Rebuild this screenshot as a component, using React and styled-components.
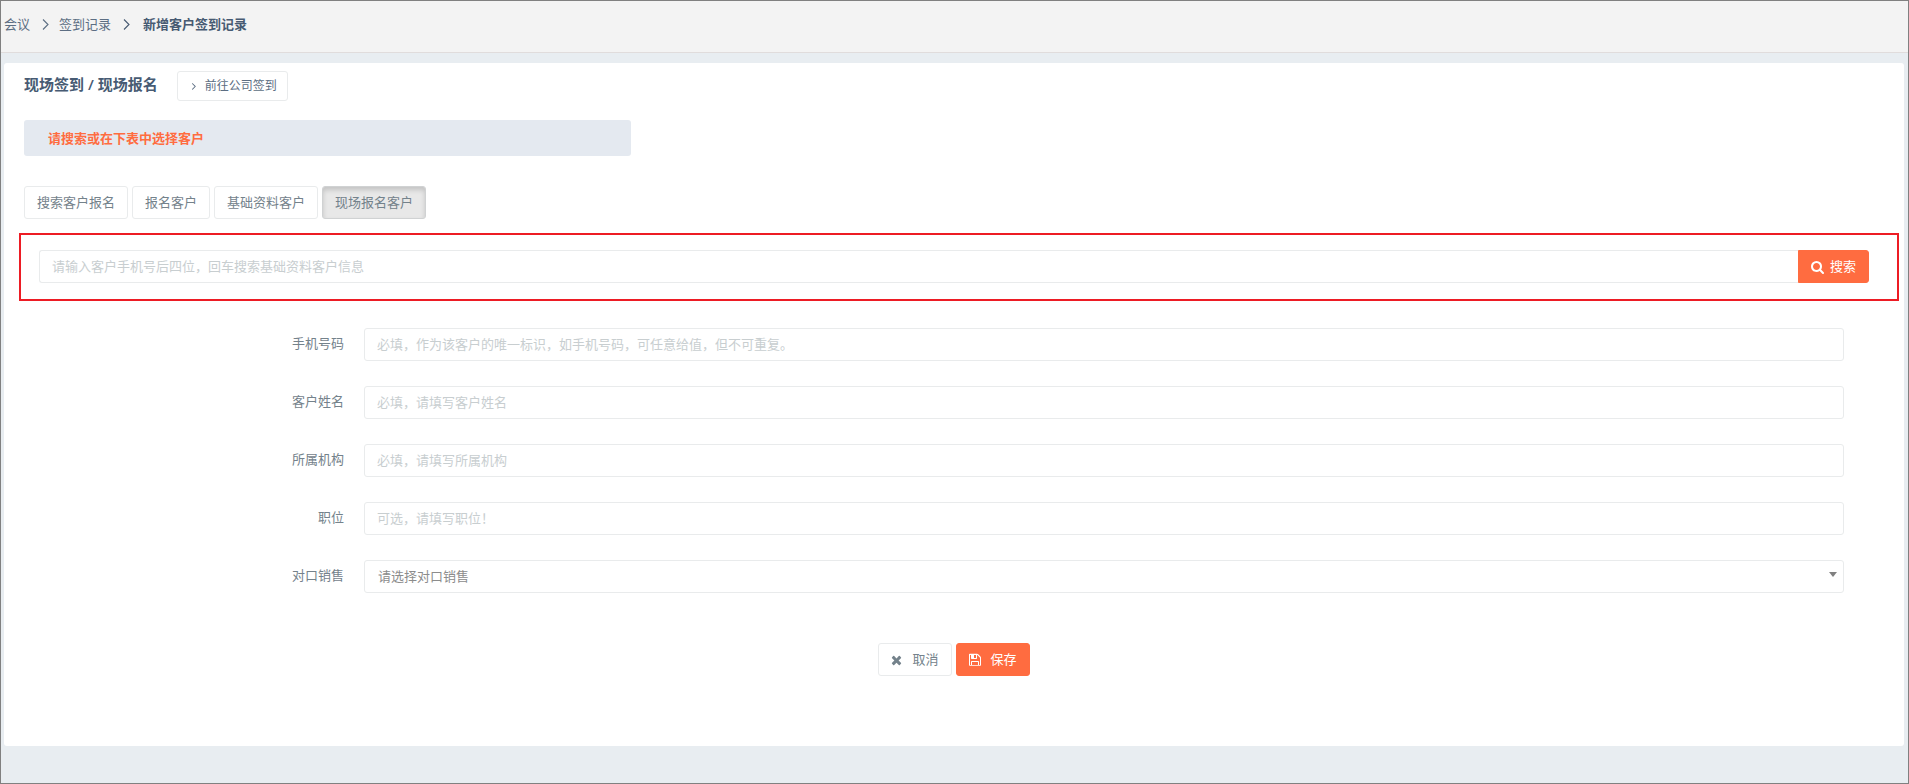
import React from "react";
import styled, { createGlobalStyle, css } from "styled-components";

const GlobalStyle = createGlobalStyle`
  *, *::before, *::after { box-sizing: border-box; }
  body { margin: 0; }
  body, button, input, select {
    font-family: "Open Sans", "Noto Sans CJK SC", sans-serif;
    font-size: 13px;
    font-weight: 400;
    line-height: 19px;
  }
`;

const Page = styled.div`
  min-height: 100vh;
  border: 1px solid #808080;
  background: #e8edf1;
  color: #74828b;
`;

const Header = styled.header`
  padding: 14px 3px 18px;
  background: #f3f3f3;
  border-bottom: 1px solid #e0dcdc;
`;

const Crumbs = styled.ol`
  display: flex;
  align-items: center;
  margin: 0;
  padding: 0;
  list-style: none;
  color: #475a72;
`;

const Chevron = styled.svg`
  flex: none;
  width: 7px;
  height: 11px;
  margin: 0 ${(p) => (p.$wide ? 13 : 10)}px 0 12px;
  fill: none;
  stroke: currentColor;
  stroke-width: 1.1;
`;

const Crumb = styled.li`
  display: flex;
  align-items: center;
  color: ${(p) => (p.$current ? "#475a72" : "#5c6e83")};
  font-weight: ${(p) => (p.$current ? 700 : 400)};
`;

const CrumbLink = styled.a`
  color: inherit;
  text-decoration: none;
`;

const Card = styled.main`
  margin: 10px 4px 37px 3px;
  padding: 8px 20px 70px;
  background: #fff;
  border-radius: 3px;
`;

const TitleRow = styled.div`
  display: flex;
  align-items: center;
  gap: 19px;
`;

const Title = styled.h1`
  margin: 0 0 4px;
  font-size: 15px;
  line-height: 22px;
  font-weight: 600;
  color: #475b73;
`;

const Button = styled.button`
  display: inline-flex;
  align-items: center;
  height: 33px;
  padding: 0 12px;
  border: 1px solid #e9ebec;
  border-radius: 3px;
  background: #fff;
  color: #74828b;
  white-space: nowrap;
  cursor: pointer;

  ${(p) => p.$small && css`
    height: 30px;
    padding: 0 10px 1px;
    font-size: 12px;
    color: #5c6e83;
  `}
  ${(p) => p.$active && css`
    background: #e8e8e8;
    border-color: #d0d2d3;
    box-shadow: inset 0 3px 5px rgba(0, 0, 0, 0.16);
  `}
  ${(p) => p.$primary && css`
    background: #ff6c40;
    border-color: #ff6c40;
    color: #fff;
  `}
`;

const Icon = styled.svg`
  flex: none;
  width: ${(p) => p.$width}px;
  height: ${(p) => p.$height}px;
  margin-right: ${(p) => p.$gap}px;
  fill: currentColor;
`;

const Notice = styled.p`
  width: calc((100% + 20px) / 3 - 20px);
  margin: 19px 0 30px;
  padding: 9px 24px 8px;
  border-radius: 3px;
  background: #e4e9f0;
  color: #ff6c40;
  font-weight: 600;
`;

const Tabs = styled.div`
  display: flex;
  gap: 4px;
`;

const SearchBox = styled.form`
  display: flex;
  margin: 14px -15px 0 -5px;
  padding: 15px 28px 16px 18px;
  border: 2px solid #ed1c24;

  input { flex: 1; border-right: 0; border-radius: 3px 0 0 3px; }
  button { border-radius: 0 3px 3px 0; }
`;

const control = css`
  display: block;
  width: 100%;
  min-width: 0;
  height: 33px;
  padding: 0 12px 2px;
  border: 1px solid #e9ebec;
  border-radius: 3px;
  background: #fff;
`;

const Input = styled.input`
  ${control}
  color: #74828b;
  &::placeholder { color: #c8ced0; opacity: 1; }
`;

const Select = styled.select`
  ${control}
  padding: 0 13px;
  appearance: none;
  color: #8c8c8c;
`;

const SelectWrap = styled.div`
  position: relative;
`;

const Arrow = styled.span`
  position: absolute;
  top: 12px;
  right: 7px;
  border: solid transparent;
  border-width: 5px 4px 0;
  border-top-color: #808080;
  pointer-events: none;
`;

const Form = styled.form`
  padding: 27px 30px 0;
`;

const Field = styled.div`
  display: grid;
  grid-template-columns: 1fr 5fr;
  margin-bottom: 25px;
`;

const Label = styled.label`
  padding: 6px 10px 0 0;
  text-align: right;
`;

const FieldBody = styled.div`
  padding: 0 10px;
`;

const Actions = styled.div`
  display: flex;
  justify-content: center;
  gap: 4px;
  padding-top: 25px;
`;

const glyphs = {
  search: {
    box: "64 0 1664 1792", width: 13, height: 14, gap: 6,
    d: "M1216 832q0-185-131.5-316.5t-316.5-131.5-316.5 131.5-131.5 316.5 131.5 316.5 316.5 131.5 316.5-131.5 131.5-316.5zm512 832q0 52-38 90t-90 38q-54 0-90-38l-343-342q-179 124-399 124-143 0-273.5-55.5t-225-150-150-225-55.5-273.5 55.5-273.5 150-225 225-150 273.5-55.5 273.5 55.5 225 150 150 225 55.5 273.5q0 220-124 399l343 343q37 37 37 90z",
  },
  times: {
    box: "192 0 1408 1792", width: 11, height: 14, gap: 10,
    d: "M1490 1322q0 40-28 68l-136 136q-28 28-68 28t-68-28l-294-294-294 294q-28 28-68 28t-68-28l-136-136q-28-28-28-68t28-68l294-294-294-294q-28-28-28-68t28-68l136-136q28-28 68-28t68 28l294 294 294-294q28-28 68-28t68 28l136 136q28 28 28 68t-28 68l-294 294 294 294q28 28 28 68z",
  },
  save: {
    box: "128 0 1536 1792", width: 12, height: 14, gap: 10,
    d: "M512 1536h768v-384h-768v384zm896 0h128v-896q0-14-10-38.5t-20-34.5l-281-281q-10-10-34-20t-39-10v416q0 40-28 68t-68 28h-576q-40 0-68-28t-28-68v-416h-128v1280h128v-416q0-40 28-68t68-28h832q40 0 68 28t28 68v416zm-384-928v-320q0-13-9.5-22.5t-22.5-9.5h-192q-13 0-22.5 9.5t-9.5 22.5v320q0 13 9.5 22.5t22.5 9.5h192q13 0 22.5-9.5t9.5-22.5zm640 32v896q0 40-28 68t-68 28h-1344q-40 0-68-28t-28-68v-1344q0-40 28-68t68-28h928q40 0 88 20t76 48l280 280q28 28 48 76t20 88z",
  },
  angle: {
    box: "0 0 1792 1792", width: 12, height: 12, gap: 5,
    d: "M1171 960q0 13-10 23l-466 466q-10 10-23 10t-23-10l-50-50q-10-10-10-23t10-23l393-393-393-393q-10-10-10-23t10-23l50-50q10-10 23-10t23 10l466 466q10 10 10 23z",
  },
};

function Glyph({ name }) {
  const g = glyphs[name];
  return (
    <Icon viewBox={g.box} $width={g.width} $height={g.height} $gap={g.gap} aria-hidden="true">
      <path d={g.d} />
    </Icon>
  );
}

function Separator({ wide }) {
  return (
    <Chevron viewBox="0 0 7 11" $wide={wide} aria-hidden="true">
      <path d="M1 .5 6 5.5 1 10.5" />
    </Chevron>
  );
}

const tabs = ["搜索客户报名", "报名客户", "基础资料客户", "现场报名客户"];

const fields = [
  { id: "phone", label: "手机号码", hint: "必填，作为该客户的唯一标识，如手机号码，可任意给值，但不可重复。" },
  { id: "name", label: "客户姓名", hint: "必填，请填写客户姓名" },
  { id: "org", label: "所属机构", hint: "必填，请填写所属机构" },
  { id: "position", label: "职位", hint: "可选，请填写职位！" },
];

export default function App() {
  const [active, setActive] = React.useState(3);
  const stop = (e) => e.preventDefault();

  return (
    <>
      <GlobalStyle />
      <Page lang="zh-CN">
        <Header>
          <Crumbs>
            <Crumb><CrumbLink href="#meeting">会议</CrumbLink></Crumb>
            <Crumb><Separator /><CrumbLink href="#records">签到记录</CrumbLink></Crumb>
            <Crumb $current aria-current="page"><Separator wide />新增客户签到记录</Crumb>
          </Crumbs>
        </Header>
        <Card>
          <TitleRow>
            <Title>现场签到 / 现场报名</Title>
            <Button type="button" $small><Glyph name="angle" />前往公司签到</Button>
          </TitleRow>
          <Notice>请搜索或在下表中选择客户</Notice>
          <Tabs>
            {tabs.map((t, i) => (
              <Button key={t} type="button" $active={i === active} aria-pressed={i === active} onClick={() => setActive(i)}>
                {t}
              </Button>
            ))}
          </Tabs>
          <SearchBox onSubmit={stop}>
            <Input aria-label="搜索客户" placeholder="请输入客户手机号后四位，回车搜索基础资料客户信息" />
            <Button $primary><Glyph name="search" />搜索</Button>
          </SearchBox>
          <Form onSubmit={stop}>
            {fields.map((f) => (
              <Field key={f.id}>
                <Label htmlFor={f.id}>{f.label}</Label>
                <FieldBody><Input id={f.id} placeholder={f.hint} /></FieldBody>
              </Field>
            ))}
            <Field>
              <Label htmlFor="sales">对口销售</Label>
              <FieldBody>
                <SelectWrap>
                  <Select id="sales"><option>请选择对口销售</option></Select>
                  <Arrow />
                </SelectWrap>
              </FieldBody>
            </Field>
            <Actions>
              <Button type="button"><Glyph name="times" />取消</Button>
              <Button $primary><Glyph name="save" />保存</Button>
            </Actions>
          </Form>
        </Card>
      </Page>
    </>
  );
}
